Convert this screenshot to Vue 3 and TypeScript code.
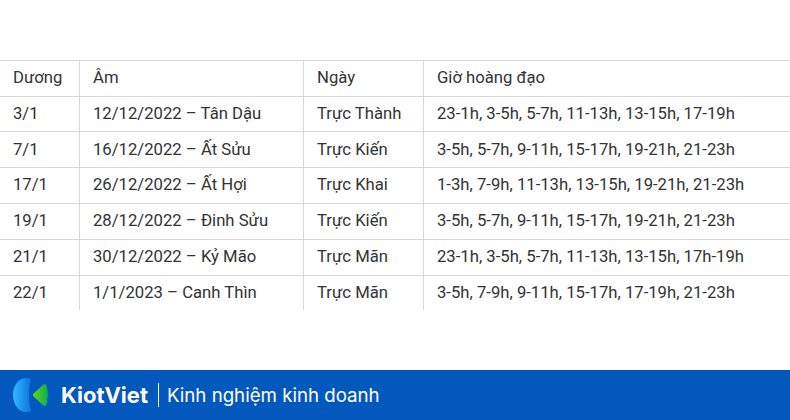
<script setup lang="ts">
const headers: string[] = ['Dương', 'Âm', 'Ngày', 'Giờ hoàng đạo']
const rows: string[][] = [
  ['3/1', '12/12/2022 – Tân Dậu', 'Trực Thành', '23-1h, 3-5h, 5-7h, 11-13h, 13-15h, 17-19h'],
  ['7/1', '16/12/2022 – Ất Sửu', 'Trực Kiến', '3-5h, 5-7h, 9-11h, 15-17h, 19-21h, 21-23h'],
  ['17/1', '26/12/2022 – Ất Hợi', 'Trực Khai', '1-3h, 7-9h, 11-13h, 13-15h, 19-21h, 21-23h'],
  ['19/1', '28/12/2022 – Đinh Sửu', 'Trực Kiến', '3-5h, 5-7h, 9-11h, 15-17h, 19-21h, 21-23h'],
  ['21/1', '30/12/2022 – Kỷ Mão', 'Trực Mãn', '23-1h, 3-5h, 5-7h, 11-13h, 13-15h, 17h-19h'],
  ['22/1', '1/1/2023 – Canh Thìn', 'Trực Mãn', '3-5h, 7-9h, 9-11h, 15-17h, 17-19h, 21-23h'],
]
</script>

<template>
  <div class="page">
    <main class="content">
      <div class="grid" role="table">
        <div class="row head" role="row">
          <div v-for="h in headers" :key="h" class="cell" role="columnheader">{{ h }}</div>
        </div>
        <div v-for="r in rows" :key="r[0]" class="row" role="row">
          <div v-for="(c, i) in r" :key="i" class="cell" role="cell">{{ c }}</div>
        </div>
      </div>
    </main>
    <footer class="bar">
      <svg class="logo" width="36" height="36" viewBox="0 0 36 36" aria-hidden="true">
        <defs>
          <linearGradient id="lb" x1="0" y1="0" x2="1" y2="0">
            <stop offset="0" stop-color="#2fb8ff" />
            <stop offset="1" stop-color="#0a74e0" />
          </linearGradient>
          <linearGradient id="lg" x1="0" y1="0" x2="1" y2="0">
            <stop offset="0" stop-color="#62d41f" />
            <stop offset="1" stop-color="#0fae4c" />
          </linearGradient>
        </defs>
        <path d="M13.500 1C5.500 1 0 8.500 0 18S5.500 35 13.500 35C15 35 16.500 34.600 18 34C16.800 29 16 24 16 18S16.800 7 18 2C16.500 1.400 15 1 13.500 1Z" fill="url(#lb)" />
        <path d="M30.500 7.500C31.600 6.800 33 7.200 33.500 8.500C35.300 14.500 35.300 21.500 33.500 27.500C33 28.800 31.600 29.200 30.500 28.500L20.800 19.700C19.700 18.800 19.700 17.200 20.800 16.300Z" fill="url(#lg)" />
      </svg>
      <span class="brand">KiotViet</span>
      <span class="divider"></span>
      <span class="tag">Kinh nghiệm kinh doanh</span>
    </footer>
  </div>
</template>

<style>
html, body { margin: 0; background: #fff; }
</style>

<style scoped>
.page {
  width: 790px;
  height: 420px;
  display: flex;
  flex-direction: column;
  overflow: hidden;
  font-family: Roboto, "Liberation Sans", sans-serif;
}
.content {
  flex: 1;
  padding-top: 59.8px;
}
.grid {
  display: grid;
  grid-auto-rows: 35.8px;
  font-size: 16.68px;
  color: #333;
}
.row {
  display: grid;
  grid-template-columns: 79px 224px 120px 1fr;
  border-top: 1px solid #d9d9d9;
  box-sizing: border-box;
}
.cell {
  display: flex;
  align-items: center;
  padding: 0 0 1.4px 13px;
  white-space: nowrap;
  border-left: 1px solid #d9d9d9;
}
.cell:first-child { border-left: 0; }
.bar {
  height: 50px;
  flex: none;
  background: #0358bd;
  display: flex;
  align-items: center;
  padding-left: 13px;
  color: #fff;
}
.logo { flex: none; }
.brand {
  margin-left: 12px;
  font-family: Inter, sans-serif;
  font-weight: 700;
  font-size: 22px;
}
.divider {
  width: 1px;
  height: 24px;
  background: #fff;
  margin: 0 9px 0 10px;
}
.tag {
  font-family: Inter, sans-serif;
  font-size: 18.68px;
  font-weight: 400;
  margin-left: -1px;
}
</style>
